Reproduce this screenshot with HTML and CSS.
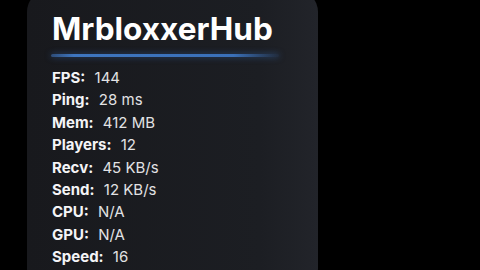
FILE: index.html
```html
<!DOCTYPE html>
<html lang="en">
<head>
  <meta charset="UTF-8">
  <title>MrbloxxerHub</title>
  <link rel="stylesheet" href="styles.css">
</head>
<body>

<div class="card">
  <h1 class="title">MrbloxxerHub</h1>
  <div class="divider"></div>
  <ul class="stats">
    <li><b>FPS:</b> 144</li>
    <li><b>Ping:</b> 28 ms</li>
    <li><b>Mem:</b> 412 MB</li>
    <li><b>Players:</b> 12</li>
    <li><b>Recv:</b> 45 KB/s</li>
    <li><b>Send:</b> 12 KB/s</li>
    <li><b>CPU:</b> N/A</li>
    <li><b>GPU:</b> N/A</li>
    <li><b>Speed:</b> 16</li>
  </ul>
</div>

</body>
</html>
```

FILE: styles.css
```css
* { box-sizing: border-box; }
body { margin:0; width:480px; height:270px; overflow:hidden; background:#000; font-family: Inter, "Noto Sans", sans-serif; }
.card { margin:-10px 0 0 27px; width:291px; height:300px; padding:21px 0 0 25px; border-radius:22px; background:linear-gradient(90deg, #18191d 0%, #1c1e23 80%, #22242a 100%); }
.title { margin:0; font-size:31.5px; font-weight:700; color:#fff; line-height:36px; }
.divider { width:228px; height:3px; margin:7px 0 0 -1px; border-radius:2px; background:linear-gradient(90deg, rgba(60,110,180,.6), #3e76c0 10%, #3a70b8 80%, rgba(50,90,150,.2)); box-shadow:0 0 6px rgba(60,120,210,.5); }
.stats { list-style:none; margin:10px 0 0; padding:0; }
.stats li { font-size:15px; line-height:22.4px; color:#e2e2e4; white-space:pre; }
.stats b { color:#f4f4f6; font-weight:700; margin-right:5px; }
```
